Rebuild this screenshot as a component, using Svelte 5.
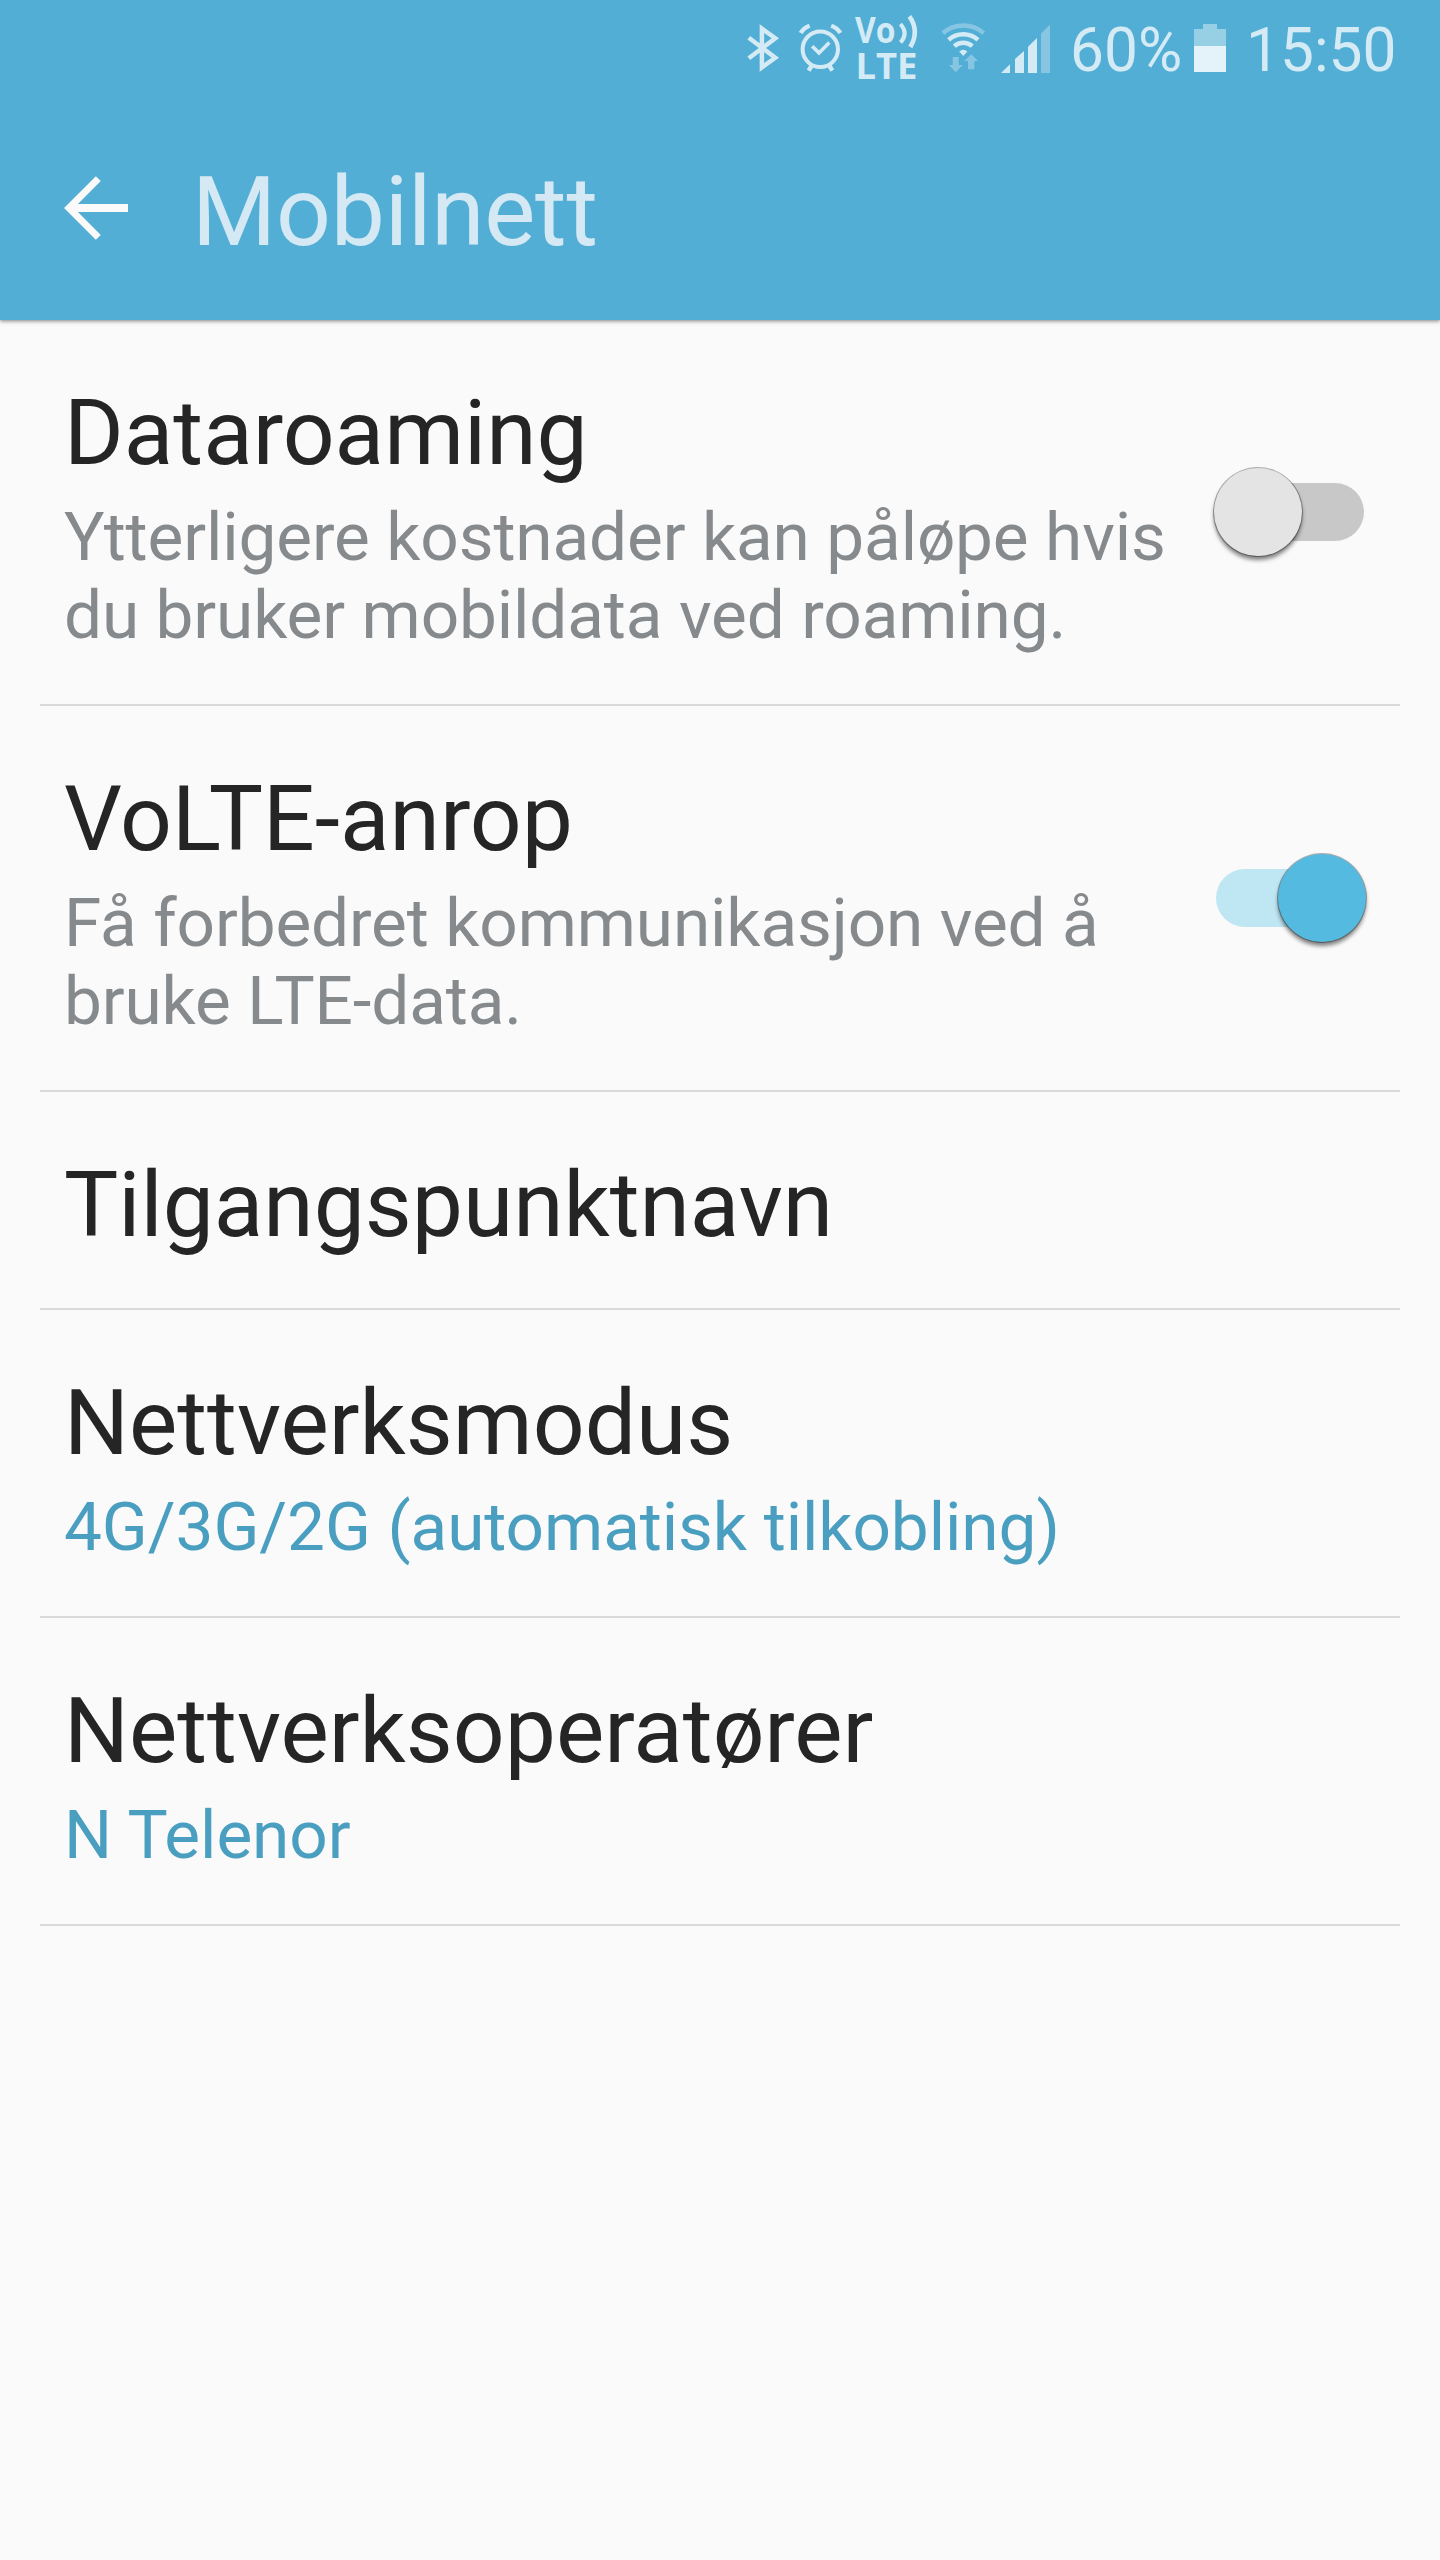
<script lang="ts">
  type Item = {
    title: string;
    summary?: string[];
    accent?: boolean;
    on?: boolean;
  };

  let items = $state<Item[]>([
    {
      title: 'Dataroaming',
      summary: ['Ytterligere kostnader kan påløpe hvis', 'du bruker mobildata ved roaming.'],
      on: false,
    },
    {
      title: 'VoLTE-anrop',
      summary: ['Få forbedret kommunikasjon ved å', 'bruke LTE-data.'],
      on: true,
    },
    { title: 'Tilgangspunktnavn' },
    { title: 'Nettverksmodus', summary: ['4G/3G/2G (automatisk tilkobling)'], accent: true },
    { title: 'Nettverksoperatører', summary: ['N Telenor'], accent: true },
  ]);
</script>

<div class="screen">
  <header>
    <div class="status-bar">
      <svg class="bluetooth" width="33" height="48" viewBox="0 0 33 48">
        <path d="M1.8 13.8 28.3 33.7 14.9 43.4V4.6L28.3 14.3 1.8 34.2" fill="none" stroke="currentColor" stroke-width="4.5" />
      </svg>
      <svg class="alarm" width="43" height="48" viewBox="0 0 43 48">
        <g fill="none" stroke="currentColor">
          <circle cx="21.3" cy="25.3" r="17.7" stroke-width="4" />
          <path d="M13.2 22.2 20 28.9 30.3 18.4" stroke-width="3.6" />
          <path d="M1.7 9Q4.6 4 10.6 1.8M41.3 9Q38.4 4 32.2 1.8" stroke-width="4.4" />
          <path d="M12.8 41.5 9.6 46.6M30.2 41.5 33.4 46.6" stroke-width="4.4" />
        </g>
      </svg>
      <svg class="volte" width="64" height="66" viewBox="0 0 64 66">
        <text x="0" y="28.3" textLength="40.5" lengthAdjust="spacingAndGlyphs">Vo</text>
        <text x="0.5" y="64" textLength="62" lengthAdjust="spacingAndGlyphs">LTE</text>
        <g fill="none" stroke="currentColor">
          <path d="M45.4 9Q53.8 18 45.6 27.5" stroke-width="4" />
          <path d="M54.4 1.4Q64.8 16 55.3 32" stroke-width="4.6" />
        </g>
      </svg>
      <svg class="wifi" width="43" height="50" viewBox="0 0 43 50">
        <g fill="none" stroke="currentColor" stroke-width="4.4">
          <path class="dim" d="M.9 10.2A30.8 30.8 0 0 1 41.7 10.2" />
          <path d="M6.6 16.9A22 22 0 0 1 36 16.9" />
          <path d="M12.3 23.2A13.4 13.4 0 0 1 30.3 23.2" />
        </g>
        <path d="M21.3 33 17.2 28.4A6.8 6.8 0 0 1 25.4 28.4Z" fill="currentColor" />
        <path class="dim" d="M10.7 34h6v8h4l-7 7.3L7 42h3.7zM29.3 31.3 36 38h-3.7v8.3H26V38h-3.6z" fill="currentColor" />
      </svg>
      <svg class="signal" width="49" height="49" viewBox="0 0 49 49" fill="currentColor">
        <path d="M0 49 9 40.3V49zM14 35 23 27V49H14zM27 22.7 36 14V49H27z" />
        <path class="dim" d="M40 9.5 49 .5V49H40z" />
      </svg>
      <span class="percent">60%</span>
      <svg class="battery" width="32" height="48" viewBox="0 0 32 48">
        <path d="M9 0h14v5h9v17H0V5h9z" fill="#97cfe4" />
        <path d="M0 22h32v26H0z" fill="#e4f3f9" />
      </svg>
      <span class="clock">15:50</span>
    </div>
    <div class="toolbar">
      <button type="button" class="back" aria-label="Tilbake">
        <svg width="64" height="64" viewBox="0 0 64 64" fill="none" stroke="currentColor">
          <path d="M34.3 2.6 5 32 34.3 61.4" stroke-width="7" />
          <path d="M6 32H64" stroke-width="8" />
        </svg>
      </button>
      <h1>Mobilnett</h1>
    </div>
  </header>

  <main>
    {#each items as item}
      <section>
        <div class="text">
          <h2>{item.title}</h2>
          {#if item.summary}
            <p class:accent={item.accent}>
              {#each item.summary as line}
                <span>{line}</span>
              {/each}
            </p>
          {/if}
        </div>
        {#if item.on !== undefined}
          <button
            type="button"
            class="switch"
            class:on={item.on}
            role="switch"
            aria-checked={item.on}
            aria-label={item.title}
            onclick={() => (item.on = !item.on)}
          >
            <span class="thumb"></span>
          </button>
        {/if}
      </section>
    {/each}
  </main>
</div>

<style>
  :global(body) {
    background: #fafafa;
  }

  .screen {
    width: 1440px;
    height: 2560px;
    overflow: hidden;
    background: #fafafa;
    font-family: Roboto, 'Noto Sans', sans-serif;
  }

  button {
    padding: 0;
    border: none;
    background: none;
    cursor: pointer;
  }

  svg {
    display: block;
    flex: none;
    overflow: visible;
  }

  header {
    height: 320px;
    background: #52aed5;
    box-shadow: 0 1px 4px rgba(0, 0, 0, 0.5);
  }

  .status-bar {
    display: flex;
    align-items: center;
    justify-content: flex-end;
    height: 96px;
    padding-right: 43px;
    box-sizing: border-box;
    color: #d4ebf5;
    font-size: 60.4px;
    line-height: 70px;
    white-space: nowrap;
  }

  .status-bar span {
    padding-top: 6px;
  }

  .dim {
    opacity: 0.4;
  }

  .alarm {
    margin-left: 19px;
  }

  .volte {
    margin-left: 13px;
    fill: currentColor;
    font-family: 'Open Sans', 'Noto Sans', sans-serif;
    font-size: 36px;
    font-weight: 700;
  }

  .wifi {
    margin-left: 23px;
  }

  .signal {
    margin-left: 16px;
  }

  .percent {
    width: 110px;
    margin-left: 20px;
  }

  .battery {
    margin-left: 14px;
  }

  .clock {
    width: 151px;
    margin-left: 20px;
  }

  .toolbar {
    display: flex;
    align-items: center;
    height: 224px;
    padding-left: 64px;
  }

  .back {
    color: #fafafa;
  }

  h1 {
    margin: 0;
    padding: 10px 0 0 64px;
    color: #d4e9f3;
    font-size: 96.4px;
    font-weight: 400;
    line-height: 112px;
    letter-spacing: -0.2px;
  }

  section {
    display: flex;
    align-items: center;
    justify-content: space-between;
    margin: 0 40px;
    padding: 0 36px 0 24px;
    border-bottom: 2px solid #d9d9d9;
  }

  .text {
    padding: 59px 0 49px;
    white-space: nowrap;
  }

  h2 {
    margin: 0;
    color: #252525;
    font-size: 91.1px;
    font-weight: 400;
    line-height: 108px;
  }

  p {
    margin: 11px 0 1px;
    color: #868a8d;
    font-size: 67.5px;
    line-height: 78px;
    letter-spacing: -0.14px;
  }

  p span {
    display: block;
  }

  .accent {
    color: #4a9fc0;
    letter-spacing: -0.08px;
  }

  .switch {
    display: flex;
    align-items: center;
    flex: none;
    width: 148px;
    height: 58px;
    border-radius: 29px;
    background: #c8c8c8;
  }

  .thumb {
    flex: none;
    width: 88px;
    height: 88px;
    margin-left: -2px;
    border-radius: 50%;
    background: #e4e4e4;
    box-shadow:
      0 0 0 1px rgba(0, 0, 0, 0.3),
      0 4px 4px rgba(0, 0, 0, 0.5);
  }

  .on {
    background: #bfe6f3;
  }

  .on .thumb {
    margin-left: 62px;
    background: #54bae0;
  }
</style>
